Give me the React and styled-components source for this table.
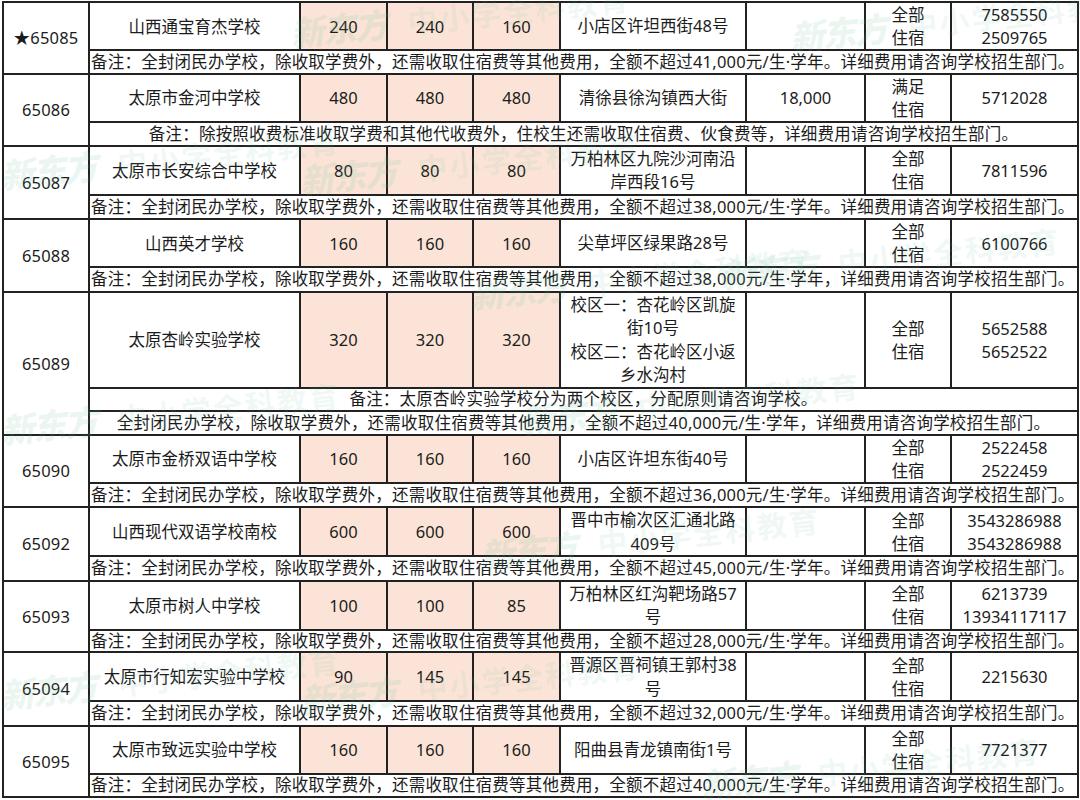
import React from 'react';
import styled, { createGlobalStyle } from 'styled-components';

const GlobalStyle = createGlobalStyle`
  html, body {
    margin: 0;
    padding: 0;
    background: #ffffff;
  }
  body {
    font-family: "Noto Sans", "Noto Sans CJK SC", sans-serif;
    color: #1c1c1c;
  }
`;

const Page = styled.div`
  position: relative;
  width: 1080px;
  height: 800px;
  overflow: hidden;
  padding: 1px 0 0 2px;
  box-sizing: border-box;
`;

const Sheet = styled.table`
  border-collapse: collapse;
  table-layout: fixed;
  width: 1075px;
  font-size: 16.5px;
  line-height: 23px;
  border: 2px solid #222;
`;

// heights passed in are the grid pitch measured between the ruled lines
const Cell = styled.td`
  border: 2px solid #222;
  padding: 0 2px;
  text-align: center;
  vertical-align: middle;
  height: ${p => (p.$h || 48) - 0.5}px;
  box-sizing: border-box;
  background: #fff;
  white-space: pre-line;
  overflow: hidden;
`;

const IdCell = styled(Cell)`
  letter-spacing: 0.2px;
`;

const NameCell = styled(Cell)`
  white-space: nowrap;
`;

const QuotaCell = styled(Cell)`
  background: #fbe4d7;
`;

const AddrCell = styled(Cell)`
  line-height: 23.5px;
`;

const NoteCell = styled(Cell)`
  white-space: nowrap;
  line-height: 20px;
  text-align: ${p => p.$align || 'center'};
  padding: 0 1px;
  letter-spacing: 0.22px;
`;

const Marks = styled.div`
  position: absolute;
  inset: 0;
  pointer-events: none;
`;

const Mark = styled.div`
  position: absolute;
  display: flex;
  align-items: center;
  gap: 22px;
  transform: rotate(-6deg);
  transform-origin: left center;
  white-space: nowrap;
`;

const Brand = styled.span`
  font-family: "Noto Sans CJK SC", sans-serif;
  font-weight: 900;
  font-size: 34px;
  font-style: italic;
  color: rgba(96, 190, 150, 0.13);
  letter-spacing: -2px;
`;

const Slogan = styled.span`
  font-family: "Noto Sans CJK SC", sans-serif;
  font-weight: 700;
  font-size: 30px;
  color: rgba(96, 190, 150, 0.1);
  letter-spacing: 2px;
`;

const schools = [
  {
    id: '★65085', name: '山西通宝育杰学校', q: [240, 240, 160], addr: '小店区许坦西街48号', fee: '',
    board: '全部\n住宿', phone: '7585550\n2509765', h: 48,
    notes: [{ t: '备注：全封闭民办学校，除收取学费外，还需收取住宿费等其他费用，全额不超过41,000元/生·学年。详细费用请咨询学校招生部门。', h: 24, a: 'left' }],
  },
  {
    id: '65086', name: '太原市金河中学校', q: [480, 480, 480], addr: '清徐县徐沟镇西大街', fee: '18,000',
    board: '满足\n住宿', phone: '5712028', h: 49,
    notes: [{ t: '备注：除按照收费标准收取学费和其他代收费外，住校生还需收取住宿费、伙食费等，详细费用请咨询学校招生部门。', h: 24 }],
  },
  {
    id: '65087', name: '太原市长安综合中学校', q: [80, 80, 80], addr: '万柏林区九院沙河南沿\n岸西段16号', fee: '',
    board: '全部\n住宿', phone: '7811596', h: 47,
    notes: [{ t: '备注：全封闭民办学校，除收取学费外，还需收取住宿费等其他费用，全额不超过38,000元/生·学年。详细费用请咨询学校招生部门。', h: 25, a: 'left' }],
  },
  {
    id: '65088', name: '山西英才学校', q: [160, 160, 160], addr: '尖草坪区绿果路28号', fee: '',
    board: '全部\n住宿', phone: '6100766', h: 48,
    notes: [{ t: '备注：全封闭民办学校，除收取学费外，还需收取住宿费等其他费用，全额不超过38,000元/生·学年，详细费用请咨询学校招生部门。', h: 25, a: 'left' }],
  },
  {
    id: '65089', name: '太原杏岭实验学校', q: [320, 320, 320], addr: '校区一：杏花岭区凯旋\n街10号\n校区二：杏花岭区小返\n乡水沟村', fee: '',
    board: '全部\n住宿', phone: '5652588\n5652522', h: 96,
    notes: [
      { t: '备注：太原杏岭实验学校分为两个校区，分配原则请咨询学校。', h: 24 },
      { t: '全封闭民办学校，除收取学费外，还需收取住宿费等其他费用，全额不超过40,000元/生·学年，详细费用请咨询学校招生部门。', h: 24 },
    ],
  },
  {
    id: '65090', name: '太原市金桥双语中学校', q: [160, 160, 160], addr: '小店区许坦东街40号', fee: '',
    board: '全部\n住宿', phone: '2522458\n2522459', h: 47,
    notes: [{ t: '备注：全封闭民办学校，除收取学费外，还需收取住宿费等其他费用，全额不超过36,000元/生·学年。详细费用请咨询学校招生部门。', h: 25, a: 'left' }],
  },
  {
    id: '65092', name: '山西现代双语学校南校', q: [600, 600, 600], addr: '晋中市榆次区汇通北路\n409号', fee: '',
    board: '全部\n住宿', phone: '3543286988\n3543286988', h: 48,
    notes: [{ t: '备注：全封闭民办学校，除收取学费外，还需收取住宿费等其他费用，全额不超过45,000元/生·学年。详细费用请咨询学校招生部门。', h: 25, a: 'left' }],
  },
  {
    id: '65093', name: '太原市树人中学校', q: [100, 100, 85], addr: '万柏林区红沟靶场路57\n号', fee: '',
    board: '全部\n住宿', phone: '6213739\n13934117117', h: 49,
    notes: [{ t: '备注：全封闭民办学校，除收取学费外，还需收取住宿费等其他费用，全额不超过28,000元/生·学年。详细费用请咨询学校招生部门。', h: 23, a: 'left' }],
  },
  {
    id: '65094', name: '太原市行知宏实验中学校', q: [90, 145, 145], addr: '晋源区晋祠镇王郭村38\n号', fee: '',
    board: '全部\n住宿', phone: '2215630', h: 47,
    notes: [{ t: '备注：全封闭民办学校，除收取学费外，还需收取住宿费等其他费用，全额不超过32,000元/生·学年。详细费用请咨询学校招生部门。', h: 25, a: 'left' }],
  },
  {
    id: '65095', name: '太原市致远实验中学校', q: [160, 160, 160], addr: '阳曲县青龙镇南街1号', fee: '',
    board: '全部\n住宿', phone: '7721377', h: 48,
    notes: [{ t: '备注：全封闭民办学校，除收取学费外，还需收取住宿费等其他费用，全额不超过40,000元/生·学年。详细费用请咨询学校招生部门。', h: 24, a: 'left' }],
  },
];

const widths = [86, 211, 87, 86, 87, 186, 119, 86, 127];

// faint watermark tiles lying over the sheet
const marks = [
  [290, 8], [790, 12], [0, 150], [300, 155], [470, 270], [720, 250],
  [0, 405], [520, 395], [480, 530], [0, 670], [300, 675], [700, 760],
];

const SchoolRows = ({ s }) => (
  <>
    <tr>
      <IdCell rowSpan={1 + s.notes.length} $h={s.h}>{s.id}</IdCell>
      <NameCell $h={s.h}>{s.name}</NameCell>
      {s.q.map((n, i) => (
        <QuotaCell key={i} $h={s.h}>{n}</QuotaCell>
      ))}
      <AddrCell $h={s.h}>{s.addr}</AddrCell>
      <Cell $h={s.h}>{s.fee}</Cell>
      <Cell $h={s.h}>{s.board}</Cell>
      <Cell $h={s.h}>{s.phone}</Cell>
    </tr>
    {s.notes.map((n, i) => (
      <tr key={i}>
        <NoteCell colSpan={8} $h={n.h} $align={n.a}>{n.t}</NoteCell>
      </tr>
    ))}
  </>
);

export default function App() {
  return (
    <Page>
      <GlobalStyle />
      <Sheet>
        <colgroup>
          {widths.map((w, i) => <col key={i} style={{ width: w }} />)}
        </colgroup>
        <tbody>
          {schools.map(s => <SchoolRows key={s.id} s={s} />)}
        </tbody>
      </Sheet>
      <Marks>
        {marks.map(([x, y], i) => (
          <Mark key={i} style={{ left: x, top: y }}>
            <Brand>新东方</Brand>
            <Slogan>中小学全科教育</Slogan>
          </Mark>
        ))}
      </Marks>
    </Page>
  );
}
